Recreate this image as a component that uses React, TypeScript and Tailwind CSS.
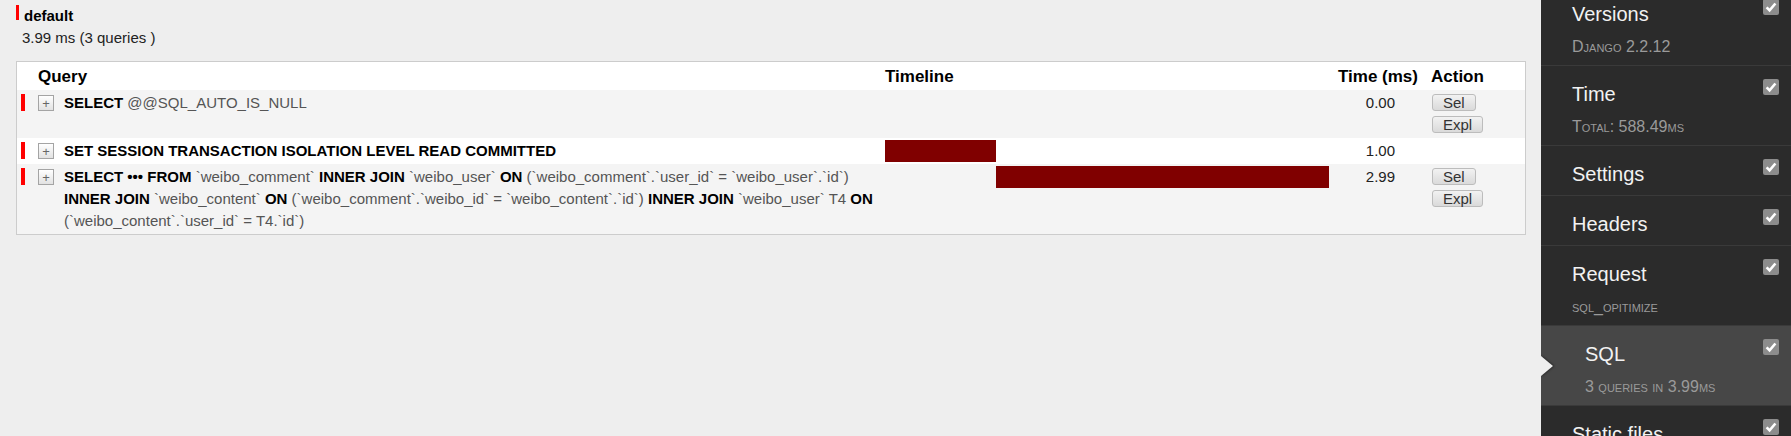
import React from "react";

const TOTAL_MS = 3.99;

const K = ({ children }: { children: React.ReactNode }) => (
  <b className="font-bold text-black">{children}</b>
);

interface Query {
  sql: React.ReactNode;
  ms: number;
  start: number;
  actions: boolean;
}

const queries: Query[] = [
  {
    sql: (
      <>
        <K>SELECT</K> @@SQL_AUTO_IS_NULL
      </>
    ),
    ms: 0,
    start: 0,
    actions: true,
  },
  {
    sql: <K>SET SESSION TRANSACTION ISOLATION LEVEL READ COMMITTED</K>,
    ms: 1.0,
    start: 0,
    actions: false,
  },
  {
    sql: (
      <>
        <K>SELECT</K> <K>•••</K> <K>FROM</K> `weibo_comment` <K>INNER JOIN</K> `weibo_user` <K>ON</K>{" "}
        (`weibo_comment`.`user_id` = `weibo_user`.`id`) <K>INNER JOIN</K> `weibo_content` <K>ON</K>{" "}
        (`weibo_comment`.`weibo_id` = `weibo_content`.`id`) <K>INNER JOIN</K> `weibo_user` T4 <K>ON</K>{" "}
        (`weibo_content`.`user_id` = T4.`id`)
      </>
    ),
    ms: 2.99,
    start: 1.0,
    actions: true,
  },
];

const panels = [
  { title: "Versions", sub: "Django 2.2.12" },
  { title: "Time", sub: "Total: 588.49ms" },
  { title: "Settings" },
  { title: "Headers" },
  { title: "Request", sub: "sql_opitimize" },
  { title: "SQL", sub: "3 queries in 3.99ms", active: true },
  { title: "Static files", sub: "0 files used" },
];

const Check = () => (
  <svg width="16" height="16" viewBox="0 0 16 16" className="shrink-0 -mt-[4px]">
    <rect x="0" y="0" width="16" height="16" rx="2" fill="#8c8c8c" />
    <path d="M3.6 8.3 L6.6 11.3 L12.4 4.5" fill="none" stroke="#fff" strokeWidth="2.6" />
  </svg>
);

const Btn = ({ label }: { label: string }) => (
  <button className="h-[17px] px-[10px] text-[15px] leading-[15px] text-[#333] border border-[#bcbcbc] rounded-[3px] bg-gradient-to-b from-[#f2f2f2] to-[#dadada]">
    {label}
  </button>
);

const cols = "grid grid-cols-[17px_26px_1fr_452px_94px_98px]";

const App = () => {
  return (
    <div className="flex h-screen w-screen overflow-hidden font-['Liberation_Sans',Arial,sans-serif]">
      <main className="flex-1 bg-[#eeeeee] pl-[16px] pr-[15px] pt-[5px]">
        <div className="flex items-start">
          <span className="w-[3px] h-[15px] bg-[#ff0000]" />
          <h4 className="ml-[5px] mt-[3px] text-[15px] leading-[15px] font-bold text-black">default</h4>
        </div>
        <p className="mt-[5px] pl-[6px] text-[15px] leading-[19px] text-[#222]">3.99 ms (3 queries )</p>

        <div className="mt-[14px] border border-[#cccccc] bg-white">
          <div className={`${cols} bg-white text-[17px] leading-[20px] font-bold text-black pt-[5px] pb-[3px]`}>
            <div />
            <div className="col-span-2 pl-[4px]">Query</div>
            <div className="pl-[4px]">Timeline</div>
            <div className="pl-[5px] whitespace-nowrap">Time (ms)</div>
            <div className="pl-[4px]">Action</div>
          </div>
          {queries.map((q, i) => (
            <div key={i} className={`${cols} ${i % 2 === 0 ? "bg-[#f4f4f4]" : "bg-white"}`}>
              <div className="pt-[4px] pl-[4px]">
                <span className="block w-[4px] h-[17px] bg-[#ff0000]" />
              </div>
              <div className="pt-[5px] pl-[4px]">
                <span className="flex items-center justify-center w-[16px] h-[16px] border border-[#a4a4a4] bg-gradient-to-b from-white to-[#e2e2e2] text-[13px] leading-none text-[#666]">
                  +
                </span>
              </div>
              <div className="pl-[4px] pr-[4px] pt-[2px] pb-[2px] text-[15px] leading-[22px] text-[#555]">
                {q.sql}
              </div>
              <div className="pl-[4px] pr-[4px] pt-[2px]">
                {q.ms > 0 && (
                  <div
                    className="h-[22px] bg-[#800000]"
                    style={{
                      marginLeft: `${(q.start / TOTAL_MS) * 100}%`,
                      width: `${(q.ms / TOTAL_MS) * 100}%`,
                    }}
                  />
                )}
              </div>
              <div className="pt-[2px] pr-[32px] text-right text-[15px] leading-[22px] text-[#222]">
                {q.ms.toFixed(2)}
              </div>
              <div className="pl-[5px] pt-[4px] pb-[5px]">
                {q.actions && (
                  <div className="flex flex-col items-start gap-[5px]">
                    <Btn label="Sel" />
                    <Btn label="Expl" />
                  </div>
                )}
              </div>
            </div>
          ))}
        </div>
      </main>

      <aside className="w-[250px] shrink-0 bg-[#2b2b2b] overflow-hidden">
        <ul className="-mt-[14px]">
          {panels.map((p) => (
            <li
              key={p.title}
              className={`relative flex justify-between items-start border-b border-[#3a3a3a] pt-[17px] pb-[9px] pr-[12px] ${
                p.active ? "bg-[#474747] pl-[44px]" : "pl-[31px]"
              }`}
            >
              {p.active && (
                <svg
                  width="12"
                  height="20"
                  viewBox="0 0 12 20"
                  className="absolute left-0 top-[30px] drop-shadow-[1px_0_1px_rgba(0,0,0,0.5)]"
                >
                  <polygon points="0,0 12,10 0,20" fill="#eeeeee" />
                </svg>
              )}
              <div>
                <div className="text-[20px] leading-[23px] text-[#f2f2f2]">{p.title}</div>
                {p.sub && (
                  <div className="mt-[11px] text-[16px] leading-[19px] text-[#9a9a9a] [font-variant:small-caps]">
                    {p.sub}
                  </div>
                )}
              </div>
              <Check />
            </li>
          ))}
        </ul>
      </aside>
    </div>
  );
};

export default App;
